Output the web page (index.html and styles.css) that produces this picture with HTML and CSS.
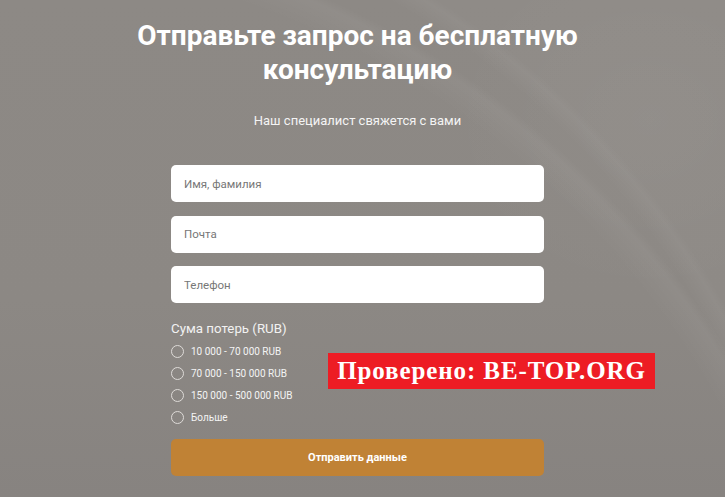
FILE: index.html
```html
<!DOCTYPE html>
<html lang="ru">
<head>
  <meta charset="UTF-8">
  <title>Бесплатная консультация</title>
  <link rel="stylesheet" href="styles.css">
</head>
<body>
  <div class="page">
    <h1>Отправьте запрос на бесплатную<br>консультацию</h1>
    <p class="subtitle">Наш специалист свяжется с вами</p>

    <form class="form">
      <input type="text" class="field" placeholder="Имя, фамилия">
      <input type="text" class="field" placeholder="Почта">
      <input type="text" class="field" placeholder="Телефон">

      <div class="group-title">Сума потерь (RUB)</div>
      <label class="option"><span class="radio"></span>10 000 - 70 000 RUB</label>
      <label class="option"><span class="radio"></span>70 000 - 150 000 RUB</label>
      <label class="option"><span class="radio"></span>150 000 - 500 000 RUB</label>
      <label class="option"><span class="radio"></span>Больше</label>

      <button type="button" class="submit">Отправить данные</button>
    </form>
  </div>

  <div class="stamp">Проверено: BE-TOP.ORG</div>
</body>
</html>
```

FILE: styles.css
```css
html, body {
  height: 100%;
}
body {
  margin: 0;
  font-family: Roboto, Arial, sans-serif;
  color: #fff;
  background-color: #8b8783;
  background-image:
    radial-gradient(circle 825px at 0 700px, transparent 97%, rgba(255,255,255,0.045) 99.2%, rgba(255,255,255,0.02) 100%),
    radial-gradient(circle 900px at -40px 820px, transparent 96%, rgba(255,255,255,0.04) 99%, transparent 100%),
    radial-gradient(ellipse 300px 260px at 650px 120px, rgba(255,255,255,0.03), transparent 70%),
    linear-gradient(180deg, #8d8985 0%, #8c8884 60%, #878380 100%);
  overflow: hidden;
  position: relative;
}
.page {
  width: 715px;
  padding-top: 19px;
  text-align: center;
}
h1 {
  margin: 0;
  font-size: 28px;
  line-height: 34px;
  font-weight: 700;
}
.subtitle {
  margin: 26px 0 0;
  font-size: 13px;
  line-height: 16px;
  color: #f4f4f4;
}
.form {
  width: 373px;
  margin: 36px auto 0;
  display: flex;
  flex-direction: column;
  text-align: left;
}
.field {
  box-sizing: border-box;
  height: 37px;
  margin: 0 0 13.5px;
  padding: 0 13px;
  border: none;
  border-radius: 5px;
  background: #fff;
  font-family: Roboto, Arial, sans-serif;
  font-size: 11.5px;
  color: #333;
}
.field::placeholder {
  color: #777;
}
.group-title {
  margin: 4px 0 4px;
  font-size: 13.3px;
  line-height: 16px;
  color: #f2f2f2;
}
.option {
  display: flex;
  align-items: center;
  gap: 7px;
  height: 22px;
  font-size: 10px;
  color: #f4f4f4;
}
.radio {
  box-sizing: border-box;
  width: 13px;
  height: 13px;
  border: 1px solid #dedbd8;
  border-radius: 50%;
}
.submit {
  height: 37px;
  margin-top: 10px;
  border: none;
  border-radius: 5px;
  background: #c08235;
  color: #fff;
  font-family: Roboto, Arial, sans-serif;
  font-size: 11px;
  font-weight: 700;
}
.stamp {
  position: absolute;
  left: 328px;
  top: 353px;
  width: 327px;
  height: 36px;
  background: #ed1c24;
  color: #fff;
  font-family: "Liberation Serif", serif;
  font-weight: 700;
  font-size: 25px;
  letter-spacing: 0.9px;
  line-height: 35px;
  text-align: center;
}
```
